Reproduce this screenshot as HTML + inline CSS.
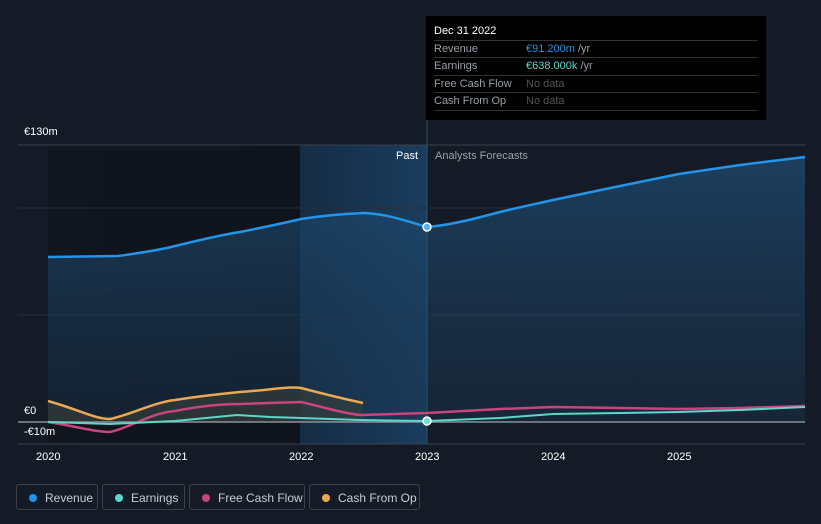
<!DOCTYPE html>
<html><head><meta charset="utf-8"><style>
body{margin:0;background:#151b26;width:821px;height:524px;overflow:hidden;font-family:"Liberation Sans",sans-serif;position:relative}
.t{position:absolute;color:#fff;font-size:11px}
.tip{position:absolute;left:426px;top:16px;width:340px;height:104px;background:#000;}
.tip .r{position:absolute;left:8px;width:324px;border-top:1px solid #333;font-size:11px;color:#9aa0a8;height:17px;line-height:17px}
.lg{position:absolute;top:484px;height:26px;border:1px solid #3a404c;border-radius:3px;color:#c8ccd2;font-size:12px;line-height:26px;box-sizing:border-box}
.lg i{position:absolute;left:12px;top:9px;width:8px;height:8px;border-radius:50%}
</style></head><body>
<svg width="821" height="524" style="position:absolute;left:0;top:0">
<defs>
<linearGradient id="rg" x1="0" y1="0" x2="0" y2="1"><stop offset="0" stop-color="#1e4a70" stop-opacity=".75"/><stop offset="1" stop-color="#1a3550" stop-opacity=".4"/></linearGradient>
<linearGradient id="pb" x1="0" y1="0" x2="1" y2="0"><stop offset="0" stop-color="#11151d"/><stop offset="1" stop-color="#0f131b"/></linearGradient>
<linearGradient id="bb" x1="0" y1="0" x2="1" y2="0"><stop offset="0" stop-color="#152c44"/><stop offset="1" stop-color="#1a3d5e"/></linearGradient>
</defs>
<rect x="48" y="145" width="252" height="299" fill="url(#pb)"/>
<rect x="300" y="145" width="127" height="299" fill="url(#bb)"/>
<line x1="18" y1="145" x2="805" y2="145" stroke="#3a404c"/>
<line x1="18" y1="208" x2="805" y2="208" stroke="#262c38"/>
<line x1="18" y1="315" x2="805" y2="315" stroke="#262c38"/>
<path d="M48,257 L118,256 C140,253 160,250 175,246 C200,240 220,235 240,232 C260,228 280,224 301,219 C320,216 340,214 365,213 C385,214 400,219 427,227 C450,225 470,220 500,212 C520,207 540,203 553,200 L620,186 L679,174 L740,165 L805,157 L805,422 L48,422Z" fill="url(#rg)"/>
<path d="M48,401 C80,410 95,419 110,419 C130,415 155,402 175,400 C200,396 220,394 240,392 C270,390 290,386 301,388 C320,393 340,398 363,403 L363,422 L48,422Z" fill="#3a4038" opacity=".6"/>
<line x1="18" y1="422" x2="805" y2="422" stroke="#8a8f98" stroke-width="1.5"/>
<line x1="18" y1="444" x2="805" y2="444" stroke="#3a404c"/>
<line x1="427" y1="120" x2="427" y2="444" stroke="#2a5070"/>
<path d="M48,257 L118,256 C140,253 160,250 175,246 C200,240 220,235 240,232 C260,228 280,224 301,219 C320,216 340,214 365,213 C385,214 400,219 427,227 C450,225 470,220 500,212 C520,207 540,203 553,200 L620,186 L679,174 L740,165 L805,157" fill="none" stroke="#2394e8" stroke-width="2.5"/>
<path d="M48,401 C80,410 95,419 110,419 C130,415 155,402 175,400 C200,396 220,394 240,392 C270,390 290,386 301,388 C320,393 340,398 363,403" fill="none" stroke="#e8a856" stroke-width="2.5"/>
<path d="M48,422 C80,427 95,432 110,432 C130,428 150,413 175,411 C200,406 220,404 240,404 L301,402 C320,406 340,413 360,415 L427,413 L500,409 L553,407 L620,408 L679,409 L740,408 L805,406" fill="none" stroke="#c8447e" stroke-width="2.5"/>
<path d="M48,422 L110,424 L175,421 L237,415 L270,417 L301,418 L360,420 L427,421 L500,418 L553,414 L620,413 L679,412 L740,410 L805,407" fill="none" stroke="#5cd6c8" stroke-width="2"/>
<circle cx="427" cy="227" r="4" fill="#5ab0f0" stroke="#fff" stroke-width="1.5"/>
<circle cx="427" cy="421" r="4" fill="#6ee0d0" stroke="#fff" stroke-width="1.5"/>
</svg>
<div class="t" style="left:24px;top:126px">€130m</div>
<div class="t" style="left:24px;top:405px">€0</div>
<div class="t" style="left:24px;top:426px">-€10m</div>
<div class="t" style="left:396px;top:150px">Past</div>
<div class="t" style="left:435px;top:150px;color:#9aa0a8">Analysts Forecasts</div>
<div class="t" style="left:36px;top:451px">2020</div>
<div class="t" style="left:163px;top:451px">2021</div>
<div class="t" style="left:289px;top:451px">2022</div>
<div class="t" style="left:415px;top:451px">2023</div>
<div class="t" style="left:541px;top:451px">2024</div>
<div class="t" style="left:667px;top:451px">2025</div>
<div class="tip">
<div style="position:absolute;left:8px;top:9px;color:#fff;font-size:11px">Dec 31 2022</div>
<div class="r" style="top:24px">Revenue<span style="position:absolute;left:92px;color:#2394e8">€91.200m <span style="color:#9aa0a8">/yr</span></span></div>
<div class="r" style="top:41px">Earnings<span style="position:absolute;left:92px;color:#5cd6c8">€638.000k <span style="color:#9aa0a8">/yr</span></span></div>
<div class="r" style="top:59px">Free Cash Flow<span style="position:absolute;left:92px;color:#555">No data</span></div>
<div class="r" style="top:76px;border-bottom:1px solid #333">Cash From Op<span style="position:absolute;left:92px;color:#555">No data</span></div>
</div>
<div class="lg" style="left:16px;width:82px"><i style="background:#2394e8"></i><span style="margin-left:28px">Revenue</span></div>
<div class="lg" style="left:102px;width:83px"><i style="background:#5cd6c8"></i><span style="margin-left:28px">Earnings</span></div>
<div class="lg" style="left:189px;width:116px"><i style="background:#c8447e"></i><span style="margin-left:28px">Free Cash Flow</span></div>
<div class="lg" style="left:309px;width:111px"><i style="background:#e8a856"></i><span style="margin-left:28px">Cash From Op</span></div>
</body></html>
